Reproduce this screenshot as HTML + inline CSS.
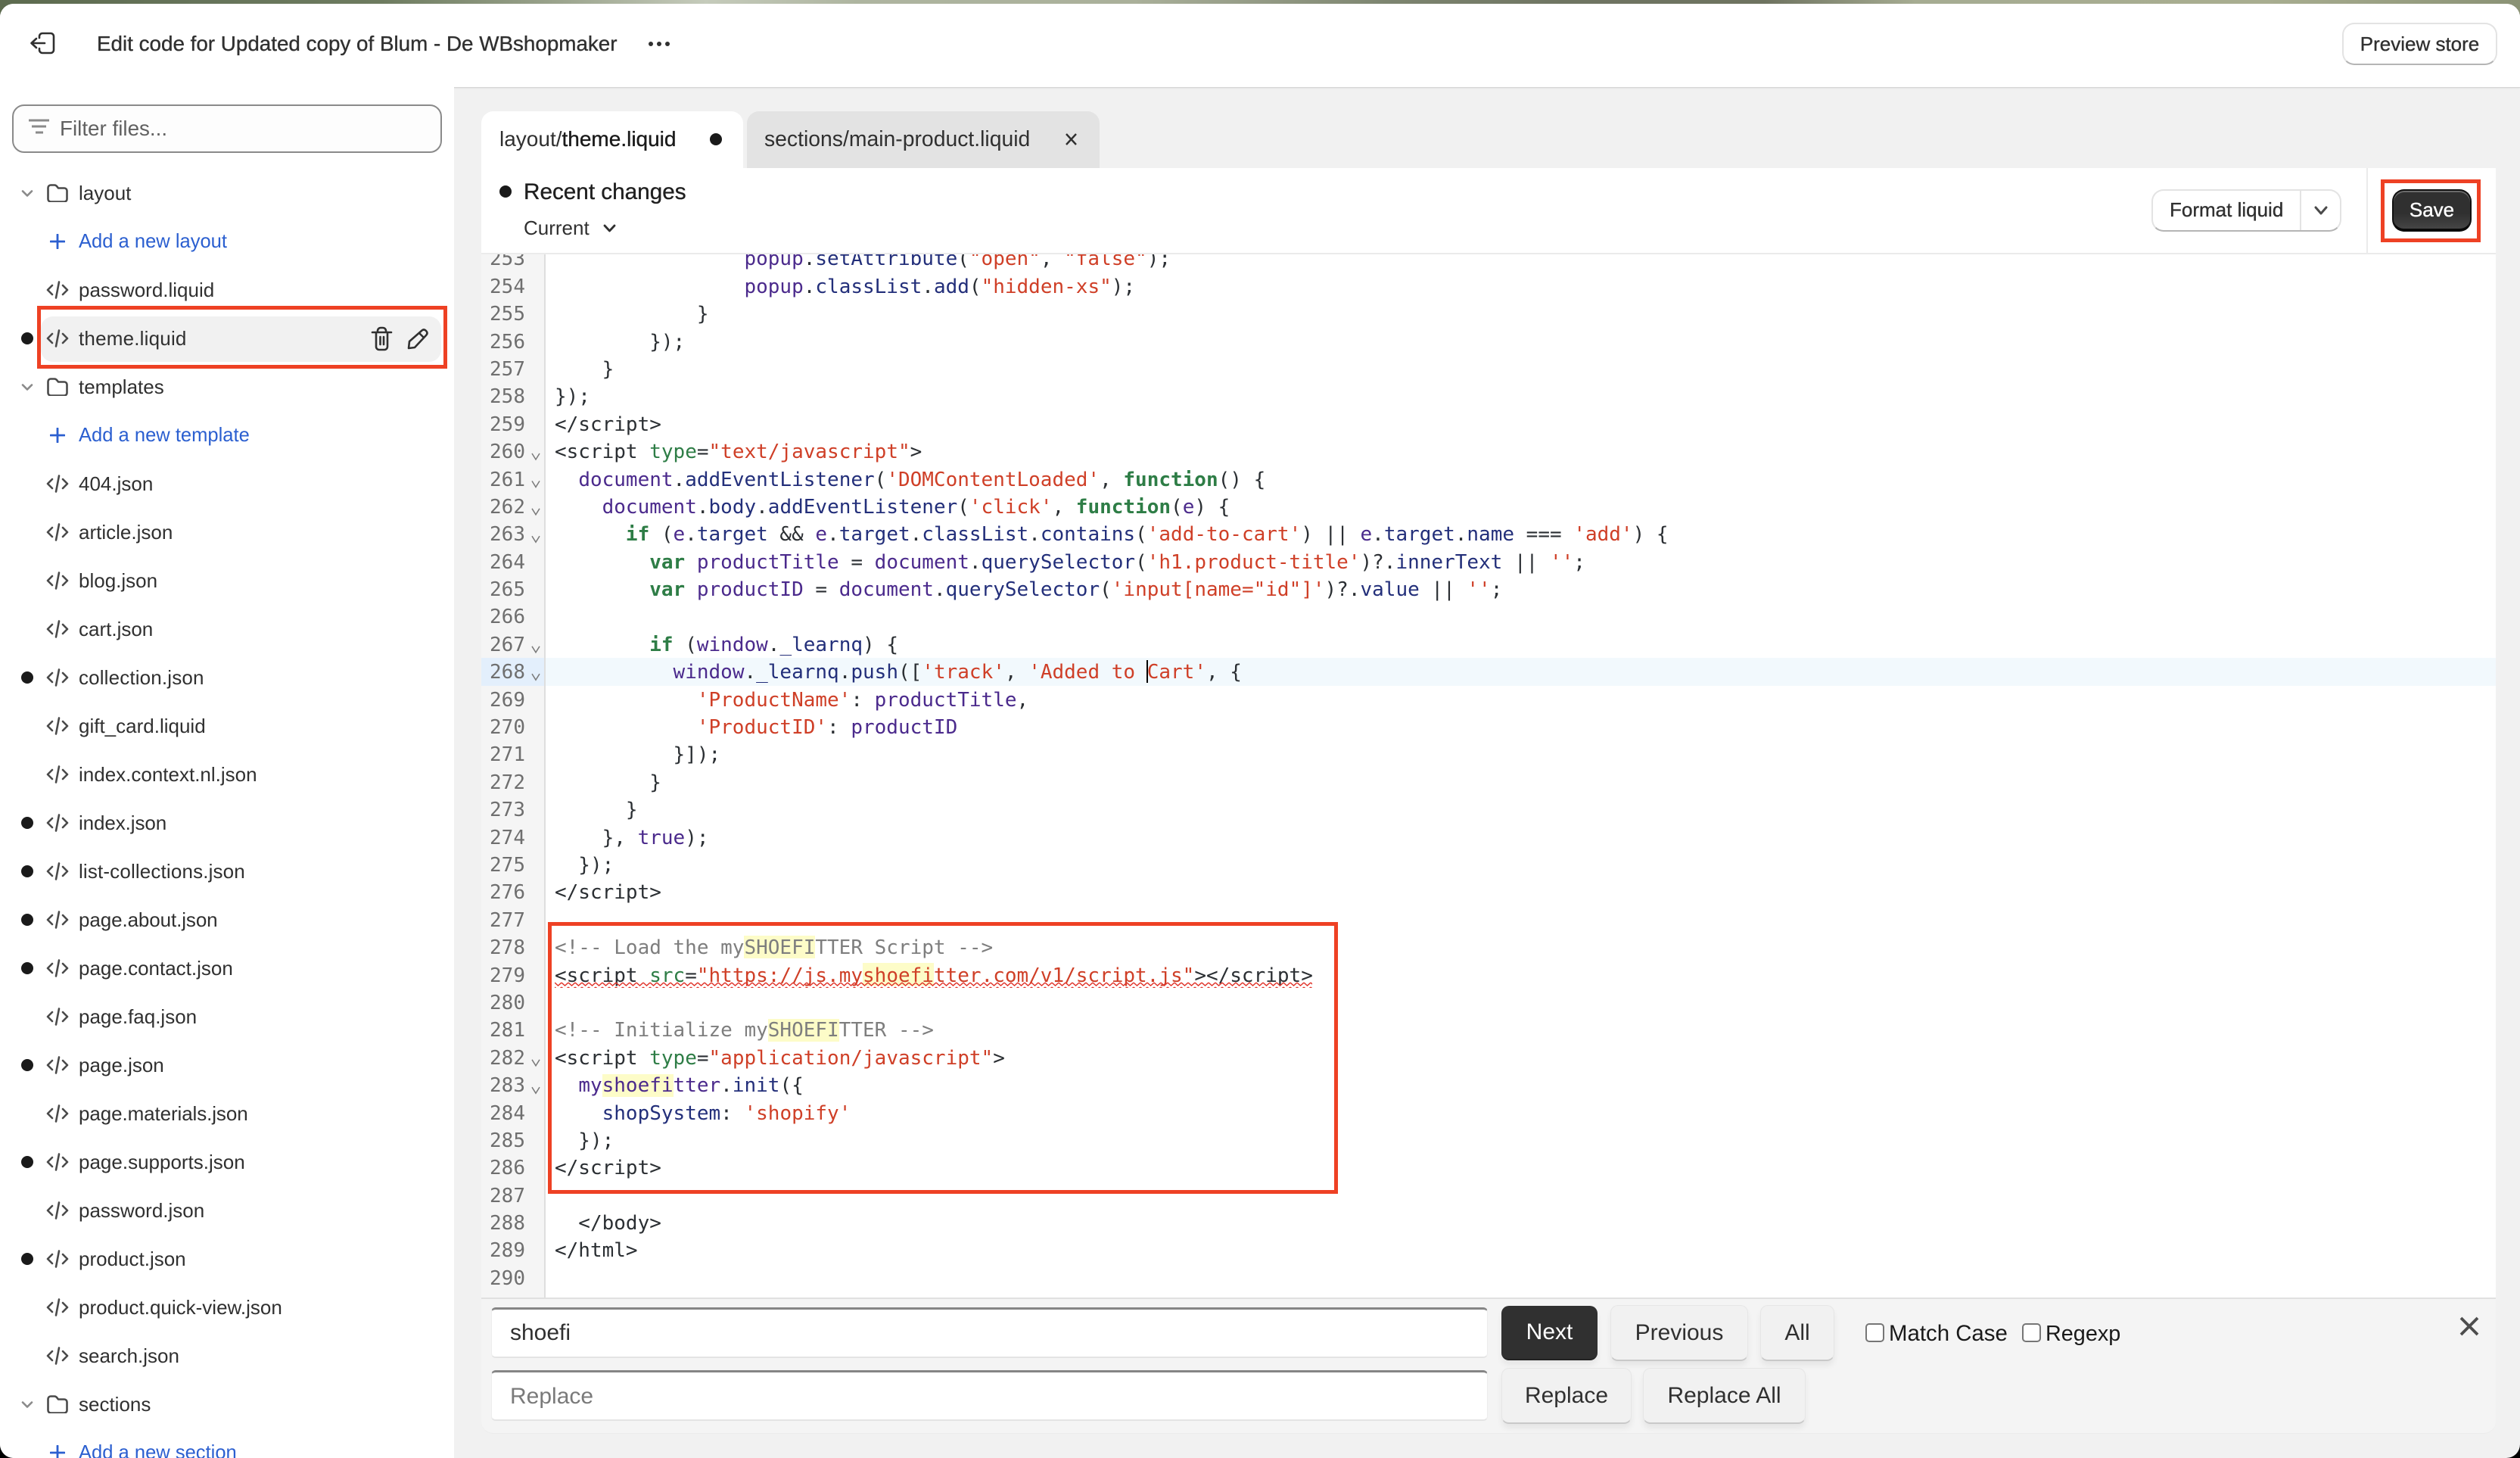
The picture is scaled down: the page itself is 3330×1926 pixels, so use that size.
<!DOCTYPE html>
<html><head><meta charset="utf-8"><title>Edit code</title>
<style>
*{box-sizing:border-box}
html,body{margin:0;padding:0;width:3330px;height:1926px;overflow:hidden}
body{position:relative;font-family:"Liberation Sans",sans-serif;color:#303030;background:linear-gradient(#000,#000) 0 100%/100% 100px no-repeat,linear-gradient(90deg,#5d6b4f 0%,#66745a 8%,#6d7b5f 15%,#9aa38c 22%,#c5cbbb 28%,#aeb5a0 34%,#aab09a 45%,#7d8570 55%,#6f7562 62%,#6e7360 70%,#a6ac92 76%,#a8ad90 90%,#8a9275 100%) 0 0/100% 100px no-repeat,#888}
#app{position:absolute;left:0;top:5px;width:3330px;height:1921px;border-radius:18px;background:#f1f1f1;overflow:hidden}
.abs,.t{position:absolute}
.t{white-space:nowrap;height:40px;line-height:40px}
.m{-webkit-text-stroke:.35px currentColor}
#top{position:absolute;left:0;top:0;width:3330px;height:110px;background:#fff;box-shadow:0 1px 0 #d6d6d6,0 2px 1px #e4e4e4}
#side{position:absolute;left:0;top:110px;width:600px;height:1811px;background:#fff;overflow:hidden}
#rows{position:absolute;left:0;top:108px;width:600px}
.row{position:relative;height:64px;font-size:26px;line-height:64px}
.row span{position:absolute;left:104px;white-space:nowrap}
.row svg{position:absolute;left:61px;top:20px;width:30px;height:24px;overflow:visible}
.row svg.fold{left:62px;width:28px}
.row svg.ch{left:28px;top:28px;width:16px;height:9px}
.row svg.pl{left:66px;top:22px;width:20px;height:20px}
.row.d::before{content:"";position:absolute;left:28px;top:24px;width:16px;height:16px;border-radius:50%;background:#1a1a1a}
.row.b{color:#2b5fd0;font-size:25.550px;line-height:65px}
.ln{fill:none;stroke:#4a4a4a;stroke-width:2.6;stroke-linecap:round;stroke-linejoin:round}
#gut{position:absolute;left:636px;top:331px;width:85px;height:1378px;background:#f5f5f5;border-right:2px solid #dedede;overflow:hidden}
#ed{position:absolute;left:720px;top:331px;width:2578px;height:1378px;overflow:hidden}
#edbg{position:absolute;left:721px;top:331px;width:2577px;height:1378px;background:#fff}
.nums{position:absolute;left:0;top:-11.6px;width:58px;text-align:right;font:26px/36.4px "DejaVu Sans Mono",monospace;color:#6f6f6f}
.nums div{height:36.4px}
#code{position:absolute;left:13px;top:-11.6px;font:26px/36.4px "DejaVu Sans Mono",monospace;color:#2b2f33}
#code div{height:36.4px;white-space:pre}
.v{color:#4b2a8c}.p{color:#232f7a}.s{color:#cf3f27}.k{color:#2e7d46;font-weight:bold}.a{color:#2e7d46}.c{color:#7e7e7e}
.hl{position:absolute;background:#fdfcc8;height:30px;width:94px}
.redb{position:absolute;border:5px solid #ee4124}
.btn{position:absolute;display:flex;align-items:center;justify-content:center;white-space:nowrap;background:#f1f1f1;border:1px solid #e6e6e6;border-bottom:2px solid #c9c9c9;border-radius:10px;font-size:30px;box-shadow:0 6px 8px rgba(0,0,0,.06)}
.inp{position:absolute;left:649px;width:1317px;height:67px;background:#fff;border:1px solid #ededed;border-top:3px solid #858585;border-bottom:2px solid #e4e4e4;border-radius:6px;font-size:30px;line-height:62px;padding-left:24px}
.cb{position:absolute;width:25px;height:25px;border:2px solid #767676;border-radius:5px;background:#fff}
.wbtn{position:absolute;display:flex;align-items:center;justify-content:center;background:#fff;border:2px solid #e3e3e3;border-bottom:2px solid #b5b5b5;border-radius:16px;font-size:26px;white-space:nowrap}
</style></head><body>
<svg width="0" height="0" style="position:absolute"><defs>
<symbol id="code" viewBox="0 0 30 24"><path class="ln" d="M8 6 2 12 8 18M22 6 28 12 22 18M17 1.500 13 22.500"/></symbol>
<symbol id="fold" viewBox="0 0 28 24"><path class="ln" d="M1.500 5a3.500 3.500 0 0 1 3.500-3.500h5c1.500 0 2.500 .7 3.300 1.800l1.700 2.200h8a3.500 3.500 0 0 1 3.500 3.500v11a3.500 3.500 0 0 1-3.500 3.500H5a3.500 3.500 0 0 1-3.500-3.500z"/></symbol>
<symbol id="ch" viewBox="0 0 16 9"><path fill="none" stroke="#8a8a8a" stroke-width="2.6" stroke-linecap="round" stroke-linejoin="round" d="M2 1.500 8 7.500 14 1.500"/></symbol>
<symbol id="pl" viewBox="0 0 20 20"><path fill="none" stroke="#2b5fd0" stroke-width="2.8" stroke-linecap="round" d="M10 1V19M1 10H19"/></symbol>
<pattern id="sq" width="9" height="6" patternUnits="userSpaceOnUse"><path d="M0 1 4.500 5 9 1" fill="none" stroke="#e0352b" stroke-width="1.500"/></pattern>
</defs></svg>
<div id="app">
<div id="top">
<svg class="abs" style="left:0;top:0" width="900" height="110"><path fill="none" stroke="#303030" stroke-width="2.6" stroke-linecap="round" stroke-linejoin="round" d="M52 44v-2a4 4 0 0 1 4-4h11a4 4 0 0 1 4 4v18a4 4 0 0 1-4 4H56a4 4 0 0 1-4-4v-2M59 51H42M48 45 41.500 51 48 57" transform="translate(0 1)"/><circle cx="860" cy="53" r="3" fill="#303030"/><circle cx="871" cy="53" r="3" fill="#303030"/><circle cx="882" cy="53" r="3" fill="#303030"/></svg>
<div class="t m" style="left:128px;top:33px;font-size:27.800px">Edit code for Updated copy of Blum - De WBshopmaker</div>
<div class="wbtn m" style="left:3095px;top:25px;width:205px;height:56px">Preview store</div>
</div>
<div id="side">
<div class="abs" style="left:16px;top:23px;width:568px;height:64px;background:#fdfdfd;border:2px solid #8a8a8a;border-radius:16px"></div>
<svg class="abs" style="left:0;top:0" width="100" height="100"><path fill="none" stroke="#8a8a8a" stroke-width="3" d="M38 47H65M42 55H61M47 63H57" transform="translate(0 -3)"/></svg>
<div class="t" style="left:79px;top:35px;font-size:27.800px;color:#616161">Filter files...</div>
<div class="abs" style="left:54px;top:303px;width:529px;height:60px;background:#f1f1f1;border-radius:16px"></div>
<div id="rows">
<div class="row"><svg class="ch"><use href="#ch"/></svg><svg class="fold"><use href="#fold"/></svg><span>layout</span></div>
<div class="row b"><svg class="pl"><use href="#pl"/></svg><span>Add a new layout</span></div>
<div class="row"><svg><use href="#code"/></svg><span>password.liquid</span></div>
<div class="row d"><svg><use href="#code"/></svg><span style="letter-spacing:.2px">theme.liquid</span></div>
<div class="row"><svg class="ch"><use href="#ch"/></svg><svg class="fold"><use href="#fold"/></svg><span>templates</span></div>
<div class="row b"><svg class="pl"><use href="#pl"/></svg><span>Add a new template</span></div>
<div class="row"><svg><use href="#code"/></svg><span>404.json</span></div>
<div class="row"><svg><use href="#code"/></svg><span>article.json</span></div>
<div class="row"><svg><use href="#code"/></svg><span>blog.json</span></div>
<div class="row"><svg><use href="#code"/></svg><span>cart.json</span></div>
<div class="row d"><svg><use href="#code"/></svg><span style="letter-spacing:.15px">collection.json</span></div>
<div class="row"><svg><use href="#code"/></svg><span>gift_card.liquid</span></div>
<div class="row"><svg><use href="#code"/></svg><span>index.context.nl.json</span></div>
<div class="row d"><svg><use href="#code"/></svg><span style="letter-spacing:-.1px">index.json</span></div>
<div class="row d"><svg><use href="#code"/></svg><span style="letter-spacing:.15px">list-collections.json</span></div>
<div class="row d"><svg><use href="#code"/></svg><span style="letter-spacing:-.1px">page.about.json</span></div>
<div class="row d"><svg><use href="#code"/></svg><span>page.contact.json</span></div>
<div class="row"><svg><use href="#code"/></svg><span>page.faq.json</span></div>
<div class="row d"><svg><use href="#code"/></svg><span>page.json</span></div>
<div class="row"><svg><use href="#code"/></svg><span style="letter-spacing:-.1px">page.materials.json</span></div>
<div class="row d"><svg><use href="#code"/></svg><span>page.supports.json</span></div>
<div class="row"><svg><use href="#code"/></svg><span>password.json</span></div>
<div class="row d"><svg><use href="#code"/></svg><span>product.json</span></div>
<div class="row"><svg><use href="#code"/></svg><span>product.quick-view.json</span></div>
<div class="row"><svg><use href="#code"/></svg><span>search.json</span></div>
<div class="row"><svg class="ch"><use href="#ch"/></svg><svg class="fold"><use href="#fold"/></svg><span>sections</span></div>
<div class="row b"><svg class="pl"><use href="#pl"/></svg><span>Add a new section</span></div>
</div>
<svg class="abs" style="left:0;top:0" width="600" height="400"><g fill="none" stroke="#303030" stroke-width="2.600" stroke-linecap="round" stroke-linejoin="round" transform="translate(0 -115)"><path d="M492 439H517M497 439V458a4 4 0 0 0 4 4h7a4 4 0 0 0 4-4V439M499 439V437a4 4 0 0 1 4-4h3a4 4 0 0 1 4 4V439M502.500 445V455M507 445V455"/><path d="M540 460 541 451 557 437Q560 434 563 437 566 440 563 443L548 459ZM554 440 560 446"/></g></svg>
</div>

<!-- tabs -->
<div class="abs" style="left:987px;top:142px;width:466px;height:75px;background:#e3e3e3;border-radius:16px 16px 0 0"></div>
<div class="abs" style="left:636px;top:142px;width:346px;height:76px;background:#fff;border-radius:16px 16px 0 0"></div>
<div class="t" style="left:660px;top:159px;font-size:28px">layout/<span class="m" style="color:#1a1a1a">theme.liquid</span></div>
<div class="abs" style="left:938px;top:171px;width:16px;height:16px;border-radius:50%;background:#1a1a1a"></div>
<div class="t" style="left:1010px;top:159px;font-size:28.350px">sections/main-product.liquid</div>
<svg class="abs" style="left:1400px;top:165px" width="30" height="30"><path fill="none" stroke="#303030" stroke-width="2.400" d="M9 7 22 21M22 7 9 21"/></svg>

<!-- header -->
<div class="abs" style="left:636px;top:217px;width:2662px;height:114px;background:#fff;border-bottom:2px solid #ebebeb"></div>
<div class="abs" style="left:660px;top:240px;width:16px;height:16px;border-radius:50%;background:#1a1a1a"></div>
<div class="t m" style="left:692px;top:229px;font-size:29.700px;color:#1f1f1f">Recent changes</div>
<div class="t" style="left:692px;top:276px;font-size:26px">Current</div>
<svg class="abs" style="left:795px;top:290px" width="22" height="14"><path fill="none" stroke="#303030" stroke-width="2.800" stroke-linecap="round" stroke-linejoin="round" d="M4 3 10.500 10 17 3"/></svg>
<div class="wbtn m" style="left:2843px;top:245px;width:251px;height:56px;justify-content:flex-start;padding-left:22px;padding-bottom:2px">Format liquid</div>
<div class="abs" style="left:3039px;top:247px;width:2px;height:52px;background:#e3e3e3"></div>
<svg class="abs" style="left:3055px;top:265px" width="24" height="18"><path fill="none" stroke="#4a4a4a" stroke-width="3" stroke-linecap="round" stroke-linejoin="round" d="M5 4 12 12 19 4"/></svg>
<div class="abs" style="left:3127px;top:217px;width:2px;height:112px;background:#ebebeb"></div>
<div class="abs m" style="left:3161px;top:245px;width:105px;height:56px;border-radius:16px;background:linear-gradient(#303030 60%,#454545);border:2px solid #111;border-bottom:4px solid #0a0a0a;box-shadow:inset 0 2px 0 #6a6a6a;color:#fff;font-size:26px;display:flex;align-items:center;justify-content:center">Save</div>

<!-- editor -->
<div id="edbg"></div>
<div id="gut">
<div class="abs" style="left:0;top:533px;width:83px;height:37px;background:#e3effc"></div>
<div class="nums">
<div>253</div><div>254</div><div>255</div><div>256</div><div>257</div><div>258</div><div>259</div><div>260</div><div>261</div><div>262</div><div>263</div><div>264</div><div>265</div><div>266</div><div>267</div><div>268</div><div>269</div><div>270</div><div>271</div><div>272</div><div>273</div><div>274</div><div>275</div><div>276</div><div>277</div><div>278</div><div>279</div><div>280</div><div>281</div><div>282</div><div>283</div><div>284</div><div>285</div><div>286</div><div>287</div><div>288</div><div>289</div><div>290</div>
</div>
<svg class="abs" style="left:0;top:0" width="83" height="1378"><path fill="none" stroke="#7a7a7a" stroke-width="1.500" d="M67 263 72 271 77 263M67 299.400 72 307.400 77 299.400M67 335.800 72 343.800 77 335.800M67 372.200 72 380.200 77 372.200M67 517.800 72 525.800 77 517.800M67 554.200 72 562.200 77 554.200M67 1063.800 72 1071.800 77 1063.800M67 1100.200 72 1108.200 77 1100.200"/></svg>
</div>
<div id="ed">
<div class="abs" style="left:1px;top:533px;width:2577px;height:37px;background:#f2f9fd"></div>
<div class="hl" style="left:262.500px;top:900px"></div>
<div class="hl" style="left:420px;top:936.400px"></div>
<div class="hl" style="left:294.500px;top:1009.500px"></div>
<div class="hl" style="left:75.500px;top:1082.500px"></div>
<div id="code">
<div>                <span class="v">popup</span>.<span class="p">setAttribute</span>(<span class="s">"open"</span>, <span class="s">"false"</span>);</div>
<div>                <span class="v">popup</span>.<span class="p">classList</span>.<span class="p">add</span>(<span class="s">"hidden-xs"</span>);</div>
<div>            }</div>
<div>        });</div>
<div>    }</div>
<div>});</div>
<div>&lt;/script&gt;</div>
<div>&lt;script <span class="a">type</span>=<span class="s">"text/javascript"</span>&gt;</div>
<div>  <span class="v">document</span>.<span class="p">addEventListener</span>(<span class="s">'DOMContentLoaded'</span>, <span class="k">function</span>() {</div>
<div>    <span class="v">document</span>.<span class="p">body</span>.<span class="p">addEventListener</span>(<span class="s">'click'</span>, <span class="k">function</span>(<span class="v">e</span>) {</div>
<div>      <span class="k">if</span> (<span class="v">e</span>.<span class="p">target</span> &amp;&amp; <span class="v">e</span>.<span class="p">target</span>.<span class="p">classList</span>.<span class="p">contains</span>(<span class="s">'add-to-cart'</span>) || <span class="v">e</span>.<span class="p">target</span>.<span class="p">name</span> === <span class="s">'add'</span>) {</div>
<div>        <span class="k">var</span> <span class="v">productTitle</span> = <span class="v">document</span>.<span class="p">querySelector</span>(<span class="s">'h1.product-title'</span>)?.<span class="p">innerText</span> || <span class="s">''</span>;</div>
<div>        <span class="k">var</span> <span class="v">productID</span> = <span class="v">document</span>.<span class="p">querySelector</span>(<span class="s">'input[name="id"]'</span>)?.<span class="p">value</span> || <span class="s">''</span>;</div>
<div></div>
<div>        <span class="k">if</span> (<span class="v">window</span>.<span class="p">_learnq</span>) {</div>
<div>          <span class="v">window</span>.<span class="p">_learnq</span>.<span class="p">push</span>([<span class="s">'track'</span>, <span class="s">'Added to Cart'</span>, {</div>
<div>            <span class="s">'ProductName'</span>: <span class="v">productTitle</span>,</div>
<div>            <span class="s">'ProductID'</span>: <span class="v">productID</span></div>
<div>          }]);</div>
<div>        }</div>
<div>      }</div>
<div>    }, <span class="v">true</span>);</div>
<div>  });</div>
<div>&lt;/script&gt;</div>
<div></div>
<div><span class="c">&lt;!-- Load the mySHOEFITTER Script --&gt;</span></div>
<div>&lt;script <span class="a">src</span>=<span class="s">"https://js.myshoefitter.com/v1/script.js"</span>&gt;&lt;/script&gt;</div>
<div></div>
<div><span class="c">&lt;!-- Initialize mySHOEFITTER --&gt;</span></div>
<div>&lt;script <span class="a">type</span>=<span class="s">"application/javascript"</span>&gt;</div>
<div>  <span class="v">myshoefitter</span>.<span class="p">init</span>({</div>
<div>    <span class="p">shopSystem</span>: <span class="s">'shopify'</span></div>
<div>  });</div>
<div>&lt;/script&gt;</div>
<div></div>
<div>  &lt;/body&gt;</div>
<div>&lt;/html&gt;</div>
<div></div>
</div>
<svg class="abs" style="left:13px;top:961px" width="1001" height="8"><rect width="1001" height="8" fill="url(#sq)"/></svg>
<div class="abs" style="left:795px;top:536px;width:2px;height:30px;background:#000"></div>
</div>

<!-- find panel -->
<div class="abs" style="left:636px;top:1709px;width:2662px;height:180px;background:#f4f4f4;border-top:2px solid #e0e0e0;border-bottom:1px solid #ebebeb;border-radius:0 0 16px 16px"></div>
<div class="inp" style="top:1722px">shoefi</div>
<div class="inp" style="top:1805px;color:#7a7a7a;line-height:63px">Replace</div>
<div class="btn" style="left:1984px;top:1720px;width:127px;height:72px;background:#303030;color:#fff;border:0;border-bottom:2px solid #222">Next</div>
<div class="btn" style="left:2128px;top:1719px;width:182px;height:74px">Previous</div>
<div class="btn" style="left:2326px;top:1719px;width:98px;height:74px">All</div>
<div class="cb" style="left:2465px;top:1743px"></div>
<div class="t" style="left:2496px;top:1737px;font-size:29.400px;color:#1a1a1a">Match Case</div>
<div class="cb" style="left:2672px;top:1743px"></div>
<div class="t" style="left:2703px;top:1737px;font-size:28.800px;color:#1a1a1a">Regexp</div>
<svg class="abs" style="left:3245px;top:1730px" width="36" height="34"><path fill="none" stroke="#4d4d4d" stroke-width="3.800" d="M7 6 29 28M29 6 7 28"/></svg>
<div class="btn" style="left:1984px;top:1802px;width:172px;height:74px">Replace</div>
<div class="btn" style="left:2171px;top:1802px;width:215px;height:74px">Replace All</div>

<!-- annotation boxes -->
<div class="redb" style="left:49px;top:399px;width:542px;height:83px"></div>
<div class="redb" style="left:3146px;top:232px;width:132px;height:83px"></div>
<div class="redb" style="left:724px;top:1213px;width:1044px;height:359px"></div>
</div>
</body></html>
